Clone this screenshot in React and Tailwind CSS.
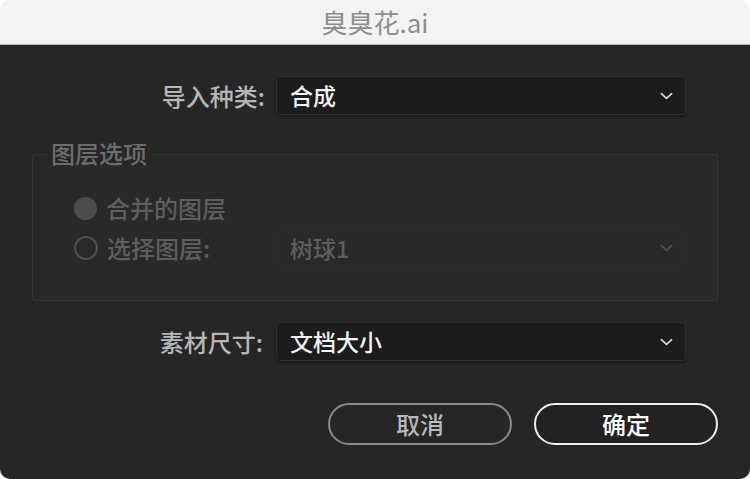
import React from 'react';

const font = { fontFamily: '"Noto Sans CJK SC", "Noto Sans", sans-serif' };

const Chevron = ({ className }) => (
  <svg viewBox="0 0 14 8" className={className} fill="none" stroke="currentColor" strokeWidth="1.8" strokeLinecap="round" strokeLinejoin="round">
    <path d="M1.5 1.5 L7 6.5 L12.5 1.5" />
  </svg>
);

const Select = ({ value, disabled }) => (
  <div
    className={`w-[410px] h-[39px] rounded-[4px] flex items-center justify-between pl-[13px] pr-[12px] ${
      disabled ? 'border border-[#2b292b] text-[#5e5e5e]' : 'bg-[#1c1c1c] border border-[#303030] shadow-[0_2px_3px_rgba(0,0,0,0.35)] text-[#f2f2f2]'
    }`}
  >
    <span className="text-[23px] leading-none font-medium">{value}</span>
    <Chevron className={`w-[13px] h-[8px] ${disabled ? 'text-[#505050]' : 'text-[#d8d8d8]'}`} />
  </div>
);

export default function App() {
  return (
    <div className="w-[750px] h-[479px] bg-white" style={font}>
      <div className="h-full rounded-[10px] overflow-hidden flex flex-col">
        <div className="h-[45px] bg-[#f3f3f3] border-b border-[#b9b9b9] flex items-center justify-center">
          <span className="text-[26px] text-[#8d8d8d] leading-none">臭臭花.ai</span>
        </div>
        <div className="flex-1 bg-[#262626] flex flex-col">
          <div className="mt-[31px] flex items-center">
            <div className="w-[265px] text-right text-[24px] text-[#b6b6b6] leading-none font-medium">导入种类:</div>
            <div className="ml-[11px]">
              <Select value="合成" />
            </div>
          </div>

          <div className="relative mt-[39px] ml-[32px] w-[686px] h-[147px] border border-[#353535] bg-[#292929] rounded-[2px] pt-[33px] pl-[41px]">
            <span className="absolute -top-[14px] left-[14px] px-[4px] bg-[#262626] text-[24px] leading-none text-[#6c6c6c] font-medium">图层选项</span>
            <div className="h-10 flex items-center gap-[9px]">
              <span className="w-[23px] h-[23px] rounded-full bg-[#4c4c4c]" />
              <span className="text-[24px] leading-none text-[#5e5e5e] font-medium">合并的图层</span>
            </div>
            <div className="h-10 flex items-center">
              <span className="w-[24px] h-[24px] rounded-full border-2 border-[#4e4e4e]" />
              <span className="ml-[9px] w-[169px] text-[24px] leading-none text-[#5e5e5e] font-medium">选择图层:</span>
              <Select value="树球1" disabled />
            </div>
          </div>

          <div className="mt-[21px] flex items-center">
            <div className="w-[263px] text-right text-[24px] text-[#b6b6b6] leading-none font-medium">素材尺寸:</div>
            <div className="ml-[13px]">
              <Select value="文档大小" />
            </div>
          </div>

          <div className="mt-[42px] flex justify-end gap-[22px] pr-[32px]">
            <button className="w-[184px] h-[42px] rounded-full border-2 border-[#8a8a8a] text-[24px] text-[#b8b8b8] leading-none font-medium bg-[#262626]">
              取消
            </button>
            <button className="w-[184px] h-[42px] rounded-full border-2 border-[#f0f0f0] text-[24px] text-white leading-none font-medium bg-[#222]">
              确定
            </button>
          </div>
        </div>
      </div>
    </div>
  );
}
